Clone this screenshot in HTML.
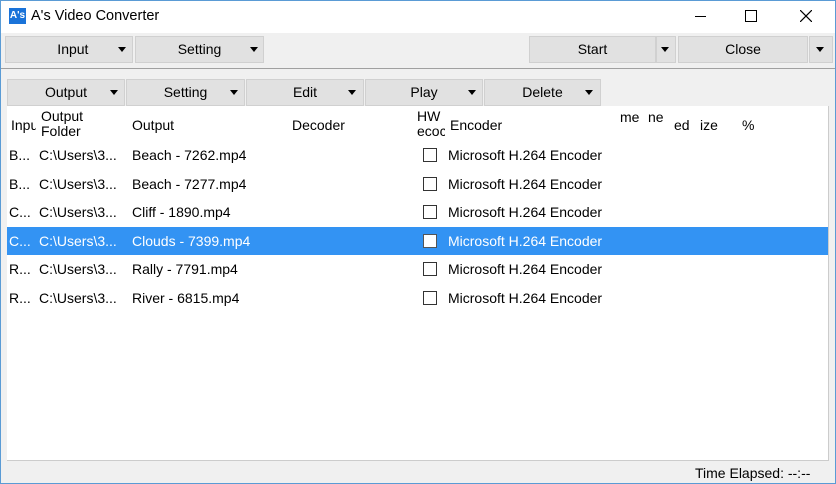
<!DOCTYPE html><html><head><style>
*{margin:0;padding:0;box-sizing:border-box}
body{width:836px;height:484px;background:#f0f0f0;font-family:"Liberation Sans",sans-serif;font-size:14px;color:#000;position:relative;overflow:hidden}
.a{position:absolute;white-space:nowrap}
.btn{position:absolute;background:#e1e1e1;border:1px solid #d0d0d0;text-align:center;line-height:25px;font-size:14px}
.tri{position:absolute;width:0;height:0;border-left:4.5px solid transparent;border-right:4.5px solid transparent;border-top:5px solid #000}
.row{position:absolute;left:7px;width:821px;height:28px;line-height:28px;font-size:14px}
.row span{position:absolute}
.cb{position:absolute;left:416px;top:7px;width:14px;height:14px;border:1px solid #333;background:#fff}
.h{position:absolute;white-space:nowrap;font-size:14px}
</style></head><body>
<div class="a" style="left:0;top:0;width:836px;height:33px;background:#fff"></div>
<div class="a" style="left:0;top:0;width:1px;height:484px;background:#5a9bd5"></div>
<div class="a" style="right:0;top:0;width:1px;height:484px;background:#5a9bd5"></div>
<div class="a" style="left:0;top:0;width:836px;height:1px;background:#5a9bd5"></div>
<div class="a" style="left:0;bottom:0;width:836px;height:1px;background:#5a9bd5"></div>
<div class="a" style="left:9px;top:8px;width:17px;height:16px;background:#1a73d9;color:#fff;font-size:10px;font-weight:bold;line-height:16px;text-align:center">A's</div>
<div class="a" style="left:31px;top:8px;font-size:14.5px">A's Video Converter</div>
<div class="a" style="left:695px;top:16px;width:11px;height:1px;background:#000"></div>
<div class="a" style="left:745px;top:10px;width:12px;height:12px;border:1px solid #000"></div>
<svg class="a" style="left:800px;top:10px" width="12" height="12"><path d="M0 0L12 12M12 0L0 12" stroke="#000" stroke-width="1.2"/></svg>

<div class="btn" style="left:5px;top:36px;width:128px;height:27px">&nbsp;&nbsp;Input</div><div class="tri" style="left:118px;top:47px"></div>
<div class="btn" style="left:135px;top:36px;width:129px;height:27px">Setting</div><div class="tri" style="left:250px;top:47px"></div>
<div class="btn" style="left:529px;top:36px;width:127px;height:27px">Start</div>
<div class="btn" style="left:656px;top:36px;width:20px;height:27px"></div><div class="tri" style="left:661px;top:47px"></div>
<div class="btn" style="left:678px;top:36px;width:130px;height:27px">Close</div>
<div class="btn" style="left:809px;top:36px;width:24px;height:27px"></div><div class="tri" style="left:816px;top:47px"></div>
<div class="a" style="left:1px;top:68px;width:834px;height:1px;background:#a0a0a0"></div>

<div class="btn" style="left:7px;top:79px;width:118px;height:27px">Output</div><div class="tri" style="left:110px;top:90px"></div>
<div class="btn" style="left:126px;top:79px;width:119px;height:27px">Setting</div><div class="tri" style="left:230px;top:90px"></div>
<div class="btn" style="left:246px;top:79px;width:118px;height:27px">Edit</div><div class="tri" style="left:348px;top:90px"></div>
<div class="btn" style="left:365px;top:79px;width:118px;height:27px">Play</div><div class="tri" style="left:468px;top:90px"></div>
<div class="btn" style="left:484px;top:79px;width:117px;height:27px">Delete</div><div class="tri" style="left:585px;top:90px"></div>

<div class="a" style="left:7px;top:106px;width:822px;height:355px;background:#fff;border-right:1px solid #ccc;border-bottom:1px solid #ccc"></div>
<div class="h" style="left:11px;top:117px;width:25px;overflow:hidden">Input</div>
<div class="h" style="left:41px;top:109px;line-height:15px">Output<br>Folder</div>
<div class="h" style="left:132px;top:117px">Output</div>
<div class="h" style="left:292px;top:117px">Decoder</div>
<div class="h" style="left:417px;top:109px;line-height:15px;width:28px;overflow:hidden">HW<br>ecoc</div>
<div class="h" style="left:450px;top:117px">Encoder</div>
<div class="h" style="left:620px;top:109px">me</div>
<div class="h" style="left:648px;top:109px">ne</div>
<div class="h" style="left:674px;top:117px">ed</div>
<div class="h" style="left:700px;top:117px">ize</div>
<div class="h" style="left:742px;top:117px">%</div>

<div class="row" style="top:141px"><span style="left:2px">B...</span><span style="left:32px">C:\Users\3...</span><span style="left:125px">Beach - 7262.mp4</span><div class="cb"></div><span style="left:441px">Microsoft H.264 Encoder</span></div>
<div class="row" style="top:170px"><span style="left:2px">B...</span><span style="left:32px">C:\Users\3...</span><span style="left:125px">Beach - 7277.mp4</span><div class="cb"></div><span style="left:441px">Microsoft H.264 Encoder</span></div>
<div class="row" style="top:198px"><span style="left:2px">C...</span><span style="left:32px">C:\Users\3...</span><span style="left:125px">Cliff - 1890.mp4</span><div class="cb"></div><span style="left:441px">Microsoft H.264 Encoder</span></div>
<div class="row" style="top:227px;background:#3393f3;color:#fff"><span style="left:2px">C...</span><span style="left:32px">C:\Users\3...</span><span style="left:125px">Clouds - 7399.mp4</span><div class="cb" style="border-color:#555"></div><span style="left:441px">Microsoft H.264 Encoder</span></div>
<div class="row" style="top:255px"><span style="left:2px">R...</span><span style="left:32px">C:\Users\3...</span><span style="left:125px">Rally - 7791.mp4</span><div class="cb"></div><span style="left:441px">Microsoft H.264 Encoder</span></div>
<div class="row" style="top:284px"><span style="left:2px">R...</span><span style="left:32px">C:\Users\3...</span><span style="left:125px">River - 6815.mp4</span><div class="cb"></div><span style="left:441px">Microsoft H.264 Encoder</span></div>

<div class="a" style="left:695px;top:465px;font-size:14px">Time Elapsed: --:--</div>
</body></html>
